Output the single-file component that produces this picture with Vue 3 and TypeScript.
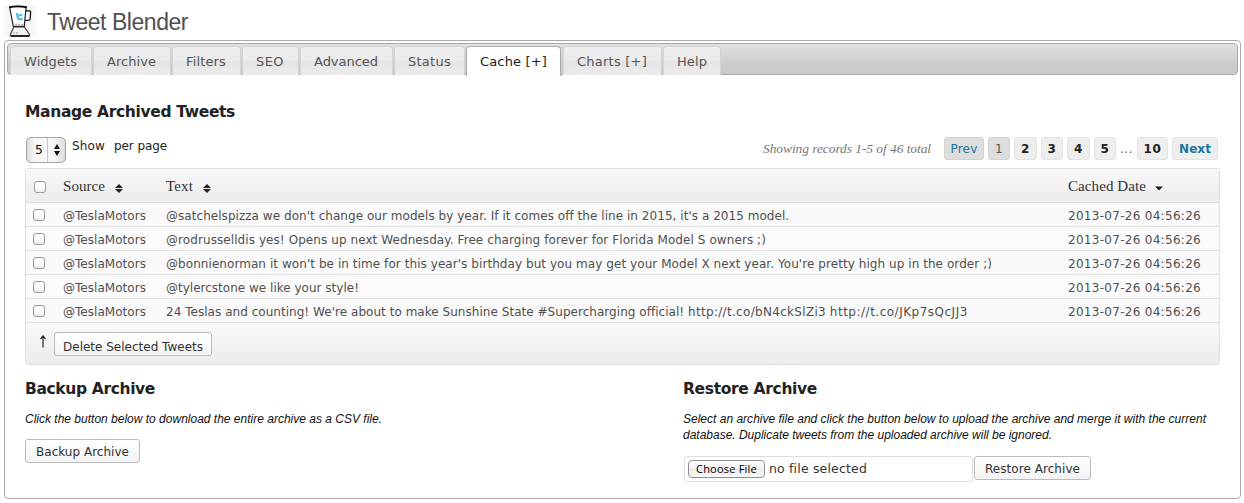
<script setup lang="ts">
import type { Directive } from 'vue'

interface Tab { label: string; width: number; text: number; active?: boolean }
interface Tweet { text: string; width: number; links?: { href: string; width: number }[] }
interface Page { label: string; width: number; text: number; kind: string }

// Spreads the letters of a label evenly so that it takes the given width.
const vFit: Directive<HTMLElement, number> = {
  mounted(el, { value }) {
    const range = document.createRange()
    range.selectNodeContents(el)
    const natural = range.getBoundingClientRect().width
    const count = (el.textContent ?? '').trim().length
    el.style.letterSpacing = `${(value - natural) / count}px`
  },
}

const tabs: Tab[] = [
  { label: 'Widgets', width: 82, text: 53 },
  { label: 'Archive', width: 78, text: 49 },
  { label: 'Filters', width: 69, text: 40 },
  { label: 'SEO', width: 57, text: 28 },
  { label: 'Advanced', width: 93, text: 64 },
  { label: 'Status', width: 71, text: 43 },
  { label: 'Cache [+]', width: 95, text: 67, active: true },
  { label: 'Charts [+]', width: 99, text: 70 },
  { label: 'Help', width: 58, text: 30 },
]

const pages: Page[] = [
  { label: 'Prev', width: 40, text: 27, kind: 'link off' },
  { label: '1', width: 22, text: 8, kind: 'off' },
  { label: '2', width: 23, text: 9, kind: 'bold' },
  { label: '3', width: 22, text: 9, kind: 'bold' },
  { label: '4', width: 23, text: 9, kind: 'bold' },
  { label: '5', width: 22, text: 9, kind: 'bold' },
  { label: '...', width: 13, text: 13, kind: 'dots' },
  { label: '10', width: 31, text: 18, kind: 'bold' },
  { label: 'Next', width: 46, text: 32, kind: 'bold link' },
]

const tweets: Tweet[] = [
  { text: "@satchelspizza we don't change our models by year. If it comes off the line in 2015, it's a 2015 model.", width: 623 },
  { text: '@rodrusselldis yes! Opens up next Wednesday. Free charging forever for Florida Model S owners ;)', width: 600 },
  { text: "@bonnienorman it won't be in time for this year's birthday but you may get your Model X next year. You're pretty high up in the order ;)", width: 826 },
  { text: '@tylercstone we like your style!', width: 193 },
  {
    text: "24 Teslas and counting! We're about to make Sunshine State #Supercharging official!",
    width: 518,
    links: [
      { href: 'http://t.co/bN4ckSlZi3', width: 138 },
      { href: 'http://t.co/JKp7sQcJJ3', width: 138 },
    ],
  },
]
</script>

<template>
  <div class="page">
    <header class="brand">
      <svg class="logo" width="32" height="32" viewBox="0 0 32 32">
        <rect width="32" height="32" fill="#f7f7f7" />
        <path d="M5.8 2.5 L9.3 21 H20.3 L22 2.5Z" fill="#fff" />
        <path d="M5.8 3 L9.3 21.3 H20.3 L22 3" fill="none" stroke="#222" stroke-width="1.2" />
        <path d="M5 2.4 Q13.5 0.4 23 2.4" fill="none" stroke="#000" stroke-width="1.8" />
        <path d="M22 5.8 H25.5 Q26.8 5.8 26.6 7.2 L26.2 14 Q26 15.4 24.5 15.4 H21" fill="none" stroke="#111" stroke-width="1.3" />
        <path d="M13 8.8 L13.8 13 Q14.2 14.8 18 14 M13.3 11 L17.6 9.8" fill="none" stroke="#38bdf0" stroke-width="1.9" stroke-linecap="round" />
        <path d="M11 19.3 h8" stroke="#aaa" stroke-width="1" stroke-dasharray="2 1" />
        <path d="M9.8 22 H20.5 L25.5 29.5 Q26 31 24.5 31 H7 Q5.5 31 6.3 29.5Z" fill="#f3f3f3" stroke="#333" stroke-width="1.1" />
        <path d="M7 31 H25" stroke="#000" stroke-width="1.5" />
        <path d="M9 28 h6" stroke="#999" stroke-width="1.2" stroke-dasharray="2 1" />
      </svg>
      <h1><span v-fit="141">Tweet Blender</span></h1>
    </header>

    <main class="panel">
      <nav class="tabs">
        <a v-for="t in tabs" :key="t.label" class="tab" :class="{ active: t.active }" :style="{ width: t.width + 'px' }">
          <span v-fit="t.text">{{ t.label }}</span>
        </a>
      </nav>

      <section class="content">
        <h2><span v-fit="210">Manage Archived Tweets</span></h2>

        <div class="toolbar">
          <div class="select">
            <span class="value">5</span>
            <span class="knob">
              <svg width="8" height="12" viewBox="0 0 8 12"><path d="M4 0 L7 5 H1Z M4 12 L7 7 H1Z" fill="#111" /></svg>
            </span>
          </div>
          <span class="show"><span v-fit="33">Show</span></span>
          <span class="show"><span v-fit="53">per page</span></span>
          <em class="total"><span v-fit="168">Showing records 1-5 of 46 total</span></em>
          <div class="pager">
            <a v-for="p in pages" :key="p.label" class="pg" :class="p.kind" :style="{ width: p.width + 'px' }">
              <span v-fit="p.text">{{ p.label }}</span>
            </a>
          </div>
        </div>

        <div class="table">
          <div class="row head">
            <span class="c-check"><i class="box" /></span>
            <span class="c-source"><span v-fit="42">Source</span>
              <svg class="sort" width="8" height="9" viewBox="0 0 8 9"><path d="M4 0 L8 4 H0Z M0 5 H8 L4 9Z" fill="#222" /></svg>
            </span>
            <span class="c-text"><span v-fit="27">Text</span>
              <svg class="sort" width="8" height="9" viewBox="0 0 8 9"><path d="M4 0 L8 4 H0Z M0 5 H8 L4 9Z" fill="#222" /></svg>
            </span>
            <span class="c-date"><span v-fit="78">Cached Date</span>
              <svg class="sort single" width="8" height="9" viewBox="0 0 8 9"><path d="M0 2.5 H8 L4 6.5Z" fill="#222" /></svg>
            </span>
          </div>
          <div v-for="t in tweets" :key="t.text" class="row">
            <span class="c-check"><i class="box" /></span>
            <span class="c-source"><span v-fit="83">@TeslaMotors</span></span>
            <span class="c-text">
              <span v-fit="t.width">{{ t.text }}</span>
              <template v-for="l in t.links" :key="l.href">{{ ' ' }}<span v-fit="l.width">{{ l.href }}</span></template>
            </span>
            <span class="c-date"><span v-fit="133">2013-07-26 04:56:26</span></span>
          </div>
          <div class="foot">
            <svg class="up" width="8" height="13" viewBox="0 0 8 13"><path d="M4 1 V12.5 M1.5 4 L4 1 L6.5 4" fill="none" stroke="#222" stroke-width="1.2" /></svg>
            <button class="btn delete"><span v-fit="140">Delete Selected Tweets</span></button>
          </div>
        </div>

        <div class="columns">
          <div class="backup">
            <h2><span v-fit="130">Backup Archive</span></h2>
            <p><span v-fit="357">Click the button below to download the entire archive as a CSV file.</span></p>
            <button class="btn save"><span v-fit="93">Backup Archive</span></button>
          </div>
          <div class="restore">
            <h2><span v-fit="134">Restore Archive</span></h2>
            <p>
              <span v-fit="523">Select an archive file and click the button below to upload the archive and merge it with the current</span><br>
              <span v-fit="369">database. Duplicate tweets from the uploaded archive will be ignored.</span>
            </p>
            <div class="upload">
              <div class="file">
                <span class="choose"><span v-fit="61">Choose File</span></span>
                <span class="none"><span v-fit="98">no file selected</span></span>
              </div>
              <button class="btn load"><span v-fit="95">Restore Archive</span></button>
            </div>
          </div>
        </div>
      </section>
    </main>
  </div>
</template>

<style>
body { margin: 0; background: #fff; }
</style>

<style scoped>
.page {
  box-sizing: border-box;
  width: 1244px;
  height: 503px;
  padding: 0 3px 4px 4px;
  overflow: hidden;
  font-family: "DejaVu Sans", Verdana, sans-serif;
  font-size: 12px;
  color: #222;
}
.page * { box-sizing: border-box; }
.page span { white-space: nowrap; }
.brand { display: flex; height: 40px; padding-top: 5px; }
.logo { display: block; flex: none; }
h1 {
  margin: 3px 0 0 11px;
  font: 400 23px/28px "Liberation Sans", Arial, sans-serif;
  color: #505050;
}
.panel {
  height: 459px;
  padding: 2px;
  border: 1px solid #aaa;
  border-radius: 4px;
}
.tabs {
  display: flex;
  gap: 1px;
  height: 32px;
  padding: 2px 2px 0;
  border: 1px solid #aaa;
  border-radius: 4px;
  background: linear-gradient(#e1e1e1, #cbcbcb 70%, #cbcbcb);
}
.tab {
  height: 29px;
  flex: none;
  padding-left: 13px;
  border: 1px solid #d3d3d3;
  border-bottom: 0;
  border-radius: 4px 4px 0 0;
  background: linear-gradient(#eee 0, #ebebeb 48%, #e4e4e4 52%, #ececec);
  font-size: 13px;
  line-height: 30px;
  color: #555;
}
.tab.active { height: 30px; margin-right: 1px; border-color: #aaa; background: #fff; color: #212121; }
.content { padding: 27px 18px 0; }
h2 { margin: 0; font-size: 15.5px; line-height: 20px; font-weight: 700; color: #222; }
.toolbar { display: flex; height: 31px; margin-top: 15px; }
.select {
  display: flex;
  width: 40px;
  height: 26px;
  margin: 0 6px 0 1px;
  border: 1px solid #a3a3a3;
  border-radius: 5px;
  background: linear-gradient(90deg, #ddd, #f7f7f7 20%, #f7f7f7 70%, #ddd);
}
.value { width: 21px; padding-left: 8px; border-right: 1px solid #c6c6c6; font-size: 12.5px; line-height: 24px; color: #111; }
.knob { display: flex; width: 17px; align-items: center; justify-content: center; }
.show { margin-right: 9px; line-height: 18px; color: #222; }
.total {
  margin-left: auto;
  margin-right: 13px;
  font: italic 13.5px/24px "Liberation Serif", Georgia, serif;
  color: #777;
}
.pager { display: flex; gap: 4px; margin-right: 2px; }
.pg {
  height: 23px;
  border: 1px solid #e3e3e3;
  border-radius: 3px;
  background: #eee;
  text-align: center;
  line-height: 23px;
  color: #222;
}
.bold { font-weight: 700; }
.off { border-color: #d3d3d3; background: #ddd; color: #555; }
.link { color: #21759b; }
.dots { border-color: transparent; background: none; color: #555; }
.dots > span { margin-left: -1px; }
.table {
  height: 197px;
  border: 1px solid #dfdfdf;
  border-radius: 3px;
  background: #f9f9f9;
}
.row {
  display: grid;
  grid-template-columns: 37px 103px 902px 1fr;
  height: 24px;
  border-bottom: 1px solid #dfdfdf;
  background: #f9f9f9;
  line-height: 26px;
  color: #505050;
}
.row:nth-child(odd) { background: #fcfcfc; }
.row.head {
  height: 34px;
  background: linear-gradient(#f9f9f9, #ececec);
  font: 15px/35px "Liberation Serif", Georgia, serif;
  color: #333;
}
.c-check { padding: 6px 0 0 7px; }
.head .c-check { padding: 12px 0 0 8px; }
.box {
  display: block;
  width: 12px;
  height: 12px;
  border: 1px solid #999;
  border-radius: 3px;
  background: linear-gradient(#fff 45%, #eee);
}
.sort { margin-left: 10px; vertical-align: -2px; }
.sort.single { margin-left: 9px; }
.foot {
  display: flex;
  height: 41px;
  padding: 9px 0 0 13px;
  background: linear-gradient(#f9f9f9, #ececec);
}
.up { margin: 3px 7px 0 0; }
.btn {
  display: block;
  height: 24px;
  margin: 0;
  padding: 0 0 0 10px;
  border: 1px solid #bbb;
  border-radius: 3px;
  background: linear-gradient(#fff, #f3f3f3);
  font: 12px/24px "DejaVu Sans", Verdana, sans-serif;
  text-align: left;
  color: #333;
}
.delete { width: 158px; padding-left: 8px; line-height: 28px; }
.columns { display: flex; padding-top: 14px; }
.backup { width: 658px; }
p {
  margin: 12px 0 0;
  font: italic 12px/16px "Liberation Sans", Arial, sans-serif;
  color: #111;
}
.save { width: 115px; margin-top: 12px; }
.upload { display: flex; margin-top: 13px; }
.file {
  display: flex;
  width: 289px;
  height: 26px;
  margin: 0 1px;
  padding: 3px;
  border: 1px solid #dfdfdf;
  border-radius: 3px;
}
.choose {
  width: 77px;
  height: 18px;
  padding-left: 7px;
  border: 1px solid #8f8f8f;
  border-radius: 4px;
  background: linear-gradient(#fff, #f0f0f0 50%, #e9e9e9 51%, #fafafa);
  font: 11px/16px "Open Sans", sans-serif;
  color: #000;
}
.none { margin-left: 4px; font-size: 12.5px; line-height: 17px; color: #333; }
.load { width: 117px; }
</style>
